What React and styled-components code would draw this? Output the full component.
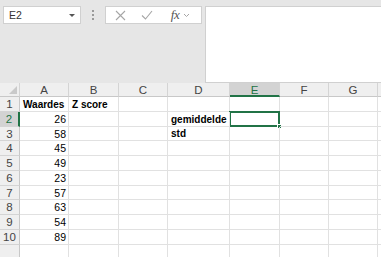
import styled, { createGlobalStyle } from "styled-components";

const GlobalStyle = createGlobalStyle`
  html, body {
    margin: 0;
    padding: 0;
    background: #e6e6e6;
  }
`;

const Window = styled.div`
  width: 381px;
  height: 257px;
  overflow: hidden;
  background: #e6e6e6;
  display: flex;
  flex-direction: column;
  font-family: "Liberation Sans", Arial, sans-serif;
`;

const FormulaArea = styled.div`
  height: 91px;
  box-sizing: border-box;
  padding: 6px 0 0 3px;
  display: flex;
  align-items: flex-start;
`;

const NameBox = styled.div`
  width: 78px;
  height: 18px;
  box-sizing: border-box;
  background: #fff;
  border: 1px solid #d0d0d0;
  display: flex;
  align-items: center;
  justify-content: space-between;
  padding: 0 5px 0 5px;
  font-size: 10.5px;
  color: #333;
`;

const Caret = styled.span`
  width: 0;
  height: 0;
  border-left: 3px solid transparent;
  border-right: 3px solid transparent;
  border-top: 3px solid #555;
`;

const Grip = styled.div`
  width: 24px;
  height: 18px;
  display: flex;
  flex-direction: column;
  align-items: center;
  justify-content: center;
  gap: 2px;
`;

const GripDot = styled.span`
  width: 2px;
  height: 2px;
  background: #9a9a9a;
`;

const ToolBox = styled.div`
  width: 97px;
  height: 18px;
  box-sizing: border-box;
  background: #fff;
  border: 1px solid #d0d0d0;
  display: flex;
  align-items: center;
  padding-left: 7px;
`;

const ToolIcon = styled.span`
  width: ${(p) => p.$w}px;
  margin-left: ${(p) => p.$gap || 0}px;
  display: flex;
  align-items: center;
  justify-content: center;
`;

const Fx = styled.span`
  font-family: "Liberation Serif", "Times New Roman", serif;
  font-style: italic;
  font-size: 13px;
  color: #555;
  letter-spacing: -0.5px;
`;

const FormulaInput = styled.div`
  flex: 1;
  height: 77px;
  margin-left: 3px;
  margin-right: -6px;
  box-sizing: border-box;
  background: #fff;
  border: 1px solid #d0d0d0;
`;

const Sheet = styled.div`
  display: grid;
  grid-template-columns: 20px 49px 50px 49px 62px 50px 49px 49px 1fr;
  grid-template-rows: 14px 15px 15px 14px 15px 15px 15px 14px 15px 15px 15px 15px;
  background: #fff;
  font-size: 10px;
`;

const Corner = styled.div`
  position: relative;
  background: #efefef;
  border-right: 1px solid #d4d4d4;
  border-bottom: 1px solid #c8c8c8;
  box-sizing: border-box;
  &::after {
    content: "";
    position: absolute;
    right: 2px;
    bottom: 2px;
    width: 0;
    height: 0;
    border-left: 8px solid transparent;
    border-bottom: 8px solid #c9c9c9;
  }
`;

const ColHead = styled.div`
  box-sizing: border-box;
  background: ${(p) => (p.$active ? "#d3d3d3" : "#efefef")};
  border-right: 1px solid #d4d4d4;
  border-bottom: ${(p) => (p.$active ? "2px solid #217346" : "1px solid #c8c8c8")};
  color: ${(p) => (p.$active ? "#217346" : "#444")};
  font-size: 11.5px;
  display: flex;
  align-items: center;
  justify-content: center;
  padding-top: ${(p) => (p.$active ? "1px" : "0")};
`;

const RowHead = styled.div`
  box-sizing: border-box;
  background: ${(p) => (p.$active ? "#d3d3d3" : "#efefef")};
  border-right: ${(p) => (p.$active ? "2px solid #217346" : "1px solid #c8c8c8")};
  border-bottom: 1px solid #d4d4d4;
  color: ${(p) => (p.$active ? "#217346" : "#444")};
  font-size: 11.5px;
  display: flex;
  align-items: center;
  justify-content: center;
`;

const Cell = styled.div`
  position: relative;
  box-sizing: border-box;
  border-right: 1px solid #e1e1e1;
  border-bottom: 1px solid #e1e1e1;
  display: flex;
  align-items: center;
  justify-content: ${(p) => (p.$num ? "flex-end" : "flex-start")};
  padding: 0 2px 0 3px;
  font-size: ${(p) => (p.$num ? "10.5px" : "10px")};
  font-weight: ${(p) => (p.$bold ? 700 : 400)};
  color: #000;
  white-space: nowrap;
  overflow: visible;
  z-index: ${(p) => (p.$bold ? 1 : 0)};
`;

const Selection = styled.div`
  position: absolute;
  left: -1px;
  top: -1px;
  right: -1px;
  bottom: -1px;
  border: 2px solid #217346;
  z-index: 2;
  &::after {
    content: "";
    position: absolute;
    right: -4px;
    bottom: -4px;
    width: 5px;
    height: 5px;
    background: #217346;
    border: 1px solid #fff;
    box-sizing: border-box;
  }
`;

const columns = ["A", "B", "C", "D", "E", "F", "G", ""];

const data = {
  1: { A: { v: "Waardes", bold: true }, B: { v: "Z score", bold: true } },
  2: { A: { v: "26", num: true }, D: { v: "gemiddelde", bold: true } },
  3: { A: { v: "58", num: true }, D: { v: "std", bold: true } },
  4: { A: { v: "45", num: true } },
  5: { A: { v: "49", num: true } },
  6: { A: { v: "23", num: true } },
  7: { A: { v: "57", num: true } },
  8: { A: { v: "63", num: true } },
  9: { A: { v: "54", num: true } },
  10: { A: { v: "89", num: true } },
  11: {},
};

const App = () => {
  const rows = Object.keys(data).map(Number);
  return (
    <Window>
      <GlobalStyle />
      <FormulaArea>
        <NameBox>
          E2
          <Caret />
        </NameBox>
        <Grip>
          <GripDot />
          <GripDot />
          <GripDot />
        </Grip>
        <ToolBox>
          <ToolIcon $w={14}>
            <svg width="11" height="11" viewBox="0 0 11 11">
              <path d="M1 1 L10 10 M10 1 L1 10" stroke="#a6a6a6" strokeWidth="1.1" fill="none" />
            </svg>
          </ToolIcon>
          <ToolIcon $w={14} $gap={13}>
            <svg width="12" height="10" viewBox="0 0 12 10">
              <path d="M1 5.5 L4.5 9 L11 1" stroke="#a6a6a6" strokeWidth="1.1" fill="none" />
            </svg>
          </ToolIcon>
          <ToolIcon $w={14} $gap={14}>
            <Fx>fx</Fx>
          </ToolIcon>
          <ToolIcon $w={8}>
            <svg width="7" height="5" viewBox="0 0 7 5">
              <path d="M1 1 L3.5 3.5 L6 1" stroke="#a6a6a6" strokeWidth="1" fill="none" />
            </svg>
          </ToolIcon>
        </ToolBox>
        <FormulaInput />
      </FormulaArea>
      <Sheet>
        <Corner />
        {columns.map((c, i) => (
          <ColHead key={i} $active={c === "E"}>
            {c}
          </ColHead>
        ))}
        {rows.map((r) => [
          <RowHead key={`h${r}`} $active={r === 2}>
            {r <= 10 ? r : ""}
          </RowHead>,
          ...columns.map((c, i) => {
            const cell = (data[r] || {})[c];
            return (
              <Cell key={`${r}-${i}`} $num={cell && cell.num} $bold={cell && cell.bold}>
                {cell ? cell.v : ""}
                {r === 2 && c === "E" && <Selection />}
              </Cell>
            );
          }),
        ])}
      </Sheet>
    </Window>
  );
};

export default App;
